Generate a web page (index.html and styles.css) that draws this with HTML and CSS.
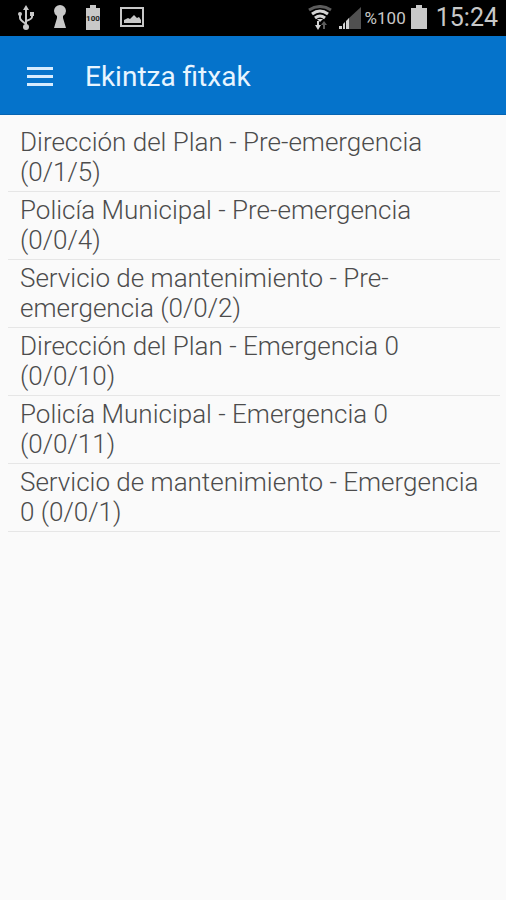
FILE: index.html
```html
<!DOCTYPE html>
<html lang="eu">
<head>
    <meta charset="UTF-8">
    <meta name="viewport" content="width=device-width, initial-scale=1.0">
    <title>Ekintza fitxak</title>
    <link rel="stylesheet" href="styles.css">
</head>
<body>
    <div class="status-bar">
        <div class="status-icons">
            <!-- USB -->
            <svg width="18" height="26" viewBox="0 0 18 26" fill="none" stroke="#c8c8c8" stroke-width="2">
                <path d="M9 5v17M3 10v3q0 2 6 6M15 9v3q0 2-6 4"/>
                <path d="M9 0l3 5H6zM13 7h4v4h-4z" fill="#c8c8c8" stroke="none"/>
                <circle cx="3" cy="9" r="2" fill="#c8c8c8" stroke="none"/>
                <circle cx="9" cy="22" r="3" fill="#c8c8c8" stroke="none"/>
            </svg>
            <!-- Keyhole -->
            <svg width="14" height="26" viewBox="0 0 14 26" fill="#c8c8c8">
                <path d="M7 0a6 6 0 0 0-6 6q0 3 3 5v2L1 23h12l-3-10v-2q3-2 3-5a6 6 0 0 0-6-6z"/>
            </svg>
            <!-- Battery level -->
            <svg width="16" height="26" viewBox="0 0 16 26" fill="#c8c8c8">
                <path d="M5 0h6v3h4v22H1V3h4z"/>
                <text class="battery-text" x="8" y="16" text-anchor="middle">100</text>
            </svg>
            <!-- Picture -->
            <svg width="26" height="26" viewBox="0 0 26 26">
                <path d="M2 3h22v18H2z" fill="none" stroke="#c8c8c8" stroke-width="2"/>
                <path d="M5 18v-3l4-2 2 1 4-4 3 3 2-1 2 3v3z" fill="#c8c8c8"/>
            </svg>
        </div>
        <div class="status-info">
            <!-- Wi-Fi -->
            <svg width="24" height="26" viewBox="0 0 24 26" fill="none" stroke-width="3">
                <path d="M1 5q11-7 22 0" stroke="#5c5c5c"/>
                <path d="M4 9q8-6 16 0M7 13q5-4 10 0" stroke="#d4d4d4"/>
                <path d="M9 14h6l-3 3z" fill="#d4d4d4"/>
                <path d="M10 16v5" stroke="#d4d4d4" stroke-width="2"/>
                <path d="M7 20h6l-3 5z" fill="#d4d4d4"/>
                <path d="M16 24v-5" stroke="#5c5c5c" stroke-width="2"/>
                <path d="M13 20h6l-3-4z" fill="#5c5c5c"/>
            </svg>
            <!-- Signal -->
            <svg class="signal" width="24" height="26" viewBox="0 0 24 26">
                <path d="M10 14L23 2v22H10z" fill="#505050"/>
                <path d="M1 21h3v3H1zM5 19l2-2v7H5zM8 16l3-3v11H8z" fill="#d0d0d0"/>
            </svg>
            <span class="percent">%100</span>
            <svg class="battery" width="18" height="26" viewBox="0 0 18 26" fill="#c8c8c8">
                <path d="M6 0h6v3h5v21H1V3h5z"/>
            </svg>
            <span class="clock">15:24</span>
        </div>
    </div>

    <header class="toolbar">
        <button type="button" class="menu-button" aria-label="Menu">
            <svg width="26" height="20" viewBox="0 0 26 20" fill="#d6ecff">
                <path d="M0 0h26v3H0zM0 8h26v3H0zM0 16h26v3H0z"/>
            </svg>
        </button>
        <h1 class="title">Ekintza fitxak</h1>
    </header>

    <main>
        <ul class="card-list">
            <li>Dirección del Plan - Pre-emergencia (0/1/5)</li>
            <li>Policía Municipal - Pre-emergencia (0/0/4)</li>
            <li>Servicio de mantenimiento - Pre-emergencia (0/0/2)</li>
            <li>Dirección del Plan - Emergencia 0 (0/0/10)</li>
            <li>Policía Municipal - Emergencia 0 (0/0/11)</li>
            <li>Servicio de mantenimiento - Emergencia 0 (0/0/1)</li>
        </ul>
    </main>
</body>
</html>
```
FILE: styles.css
```css
body {
    margin: 0;
    font-family: Roboto, sans-serif;
    background: #fafafa;
    color: #4c4c4c;
}

svg {
    display: block;
}

.status-bar {
    display: flex;
    justify-content: space-between;
    align-items: center;
    height: 36px;
    padding: 0 8px 0 17px;
    background: #000;
    color: #c8c8c8;
}

.status-icons {
    display: flex;
    align-items: center;
    gap: 18px;
}

.status-info {
    display: flex;
    align-items: center;
}

.battery-text {
    font-size: 8px;
    font-weight: bold;
    fill: #222;
}

.signal {
    margin-left: 6px;
}

.percent {
    margin-left: 3px;
    font-size: 17px;
}

.battery {
    margin: 0 8px 0 4px;
}

.clock {
    font-size: 25px;
    line-height: 34px;
}

.toolbar {
    display: flex;
    align-items: center;
    gap: 32px;
    padding: 23px 27px 20px;
    background: #0573cb;
    border-bottom: 1px solid #0664b2;
}

.menu-button {
    padding: 0;
    border: none;
    background: none;
    cursor: pointer;
}

.title {
    margin: 0;
    font-size: 28px;
    font-weight: normal;
    line-height: 35px;
    color: #e8f5ff;
}

.card-list {
    margin: 0;
    padding: 9px 6px 0 8px;
    list-style: none;
}

.card-list li {
    padding: 3px 12px 4px;
    border-bottom: 1px solid #e6e6e6;
    font-size: 26px;
    font-weight: 300;
    line-height: 30px;
}
```
